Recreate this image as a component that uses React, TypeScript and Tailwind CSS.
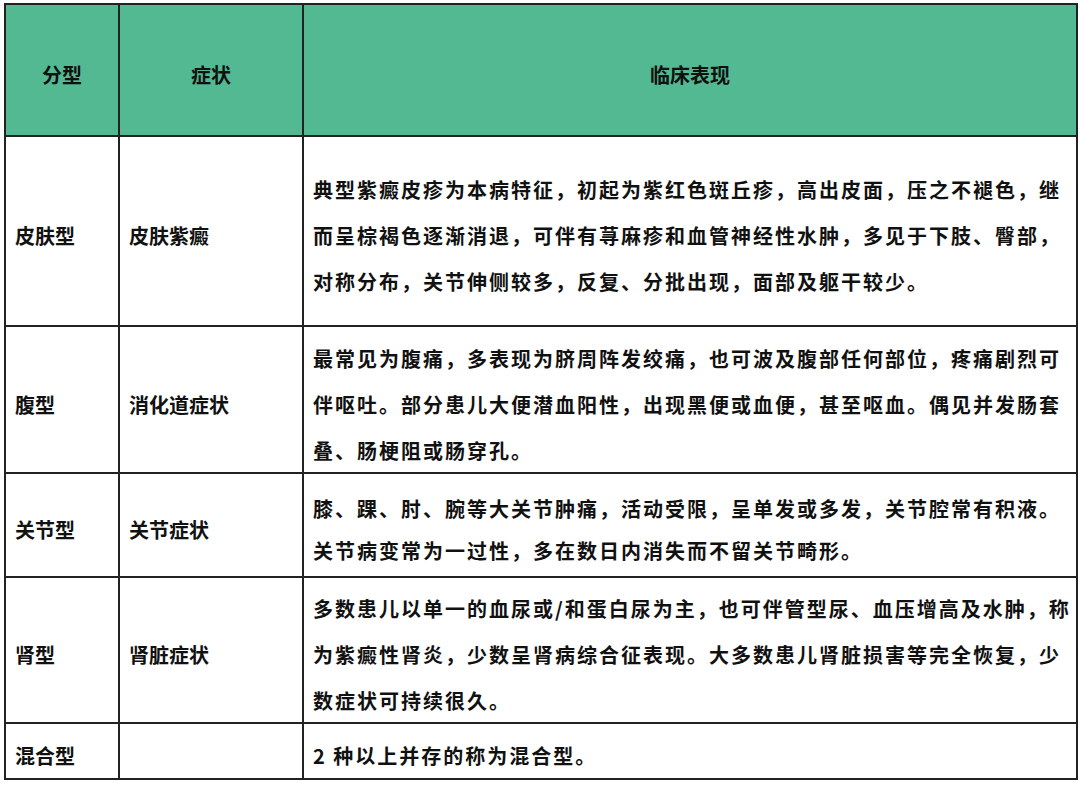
const rows = [
  {
    type: "皮肤型",
    symptom: "皮肤紫癜",
    desc: "典型紫癜皮疹为本病特征，初起为紫红色斑丘疹，高出皮面，压之不褪色，继而呈棕褐色逐渐消退，可伴有荨麻疹和血管神经性水肿，多见于下肢、臀部，对称分布，关节伸侧较多，反复、分批出现，面部及躯干较少。",
    h: "h-[190px]",
    lh: "leading-[46px]",
  },
  {
    type: "腹型",
    symptom: "消化道症状",
    desc: "最常见为腹痛，多表现为脐周阵发绞痛，也可波及腹部任何部位，疼痛剧烈可伴呕吐。部分患儿大便潜血阳性，出现黑便或血便，甚至呕血。偶见并发肠套叠、肠梗阻或肠穿孔。",
    h: "h-[147px]",
    lh: "leading-[46px]",
  },
  {
    type: "关节型",
    symptom: "关节症状",
    desc: "膝、踝、肘、腕等大关节肿痛，活动受限，呈单发或多发，关节腔常有积液。关节病变常为一过性，多在数日内消失而不留关节畸形。",
    h: "h-[104px]",
    lh: "leading-[42px]",
  },
  {
    type: "肾型",
    symptom: "肾脏症状",
    desc: "多数患儿以单一的血尿或/和蛋白尿为主，也可伴管型尿、血压增高及水肿，称为紫癜性肾炎，少数呈肾病综合征表现。大多数患儿肾脏损害等完全恢复，少数症状可持续很久。",
    h: "h-[146px]",
    lh: "leading-[46px]",
  },
  {
    type: "混合型",
    symptom: "",
    desc: "2 种以上并存的称为混合型。",
    h: "h-[56px]",
    lh: "leading-[46px]",
  },
];

// Noto CJK sits high in its line box; nudge glyphs down to match the reference
const nudge = "block translate-y-[5px]";

export default function App() {
  return (
    <div className="w-[1080px] h-[785px] bg-white pt-[3px] pl-[4px] font-['Noto_Sans_CJK_SC','Noto_Sans',sans-serif] font-bold text-[#111]">
      <table className="w-[1074px] table-fixed border-collapse border-2 border-[#222]">
        <colgroup>
          <col className="w-[114px]" />
          <col className="w-[184px]" />
          <col />
        </colgroup>
        <thead>
          <tr className="h-[132px] bg-[#52b993]">
            <th className="border-2 border-[#222] text-[20px] font-bold"><span className={nudge}>分型</span></th>
            <th className="border-2 border-[#222] text-[20px] font-bold"><span className={nudge}>症状</span></th>
            <th className="border-2 border-[#222] text-[20px] font-bold"><span className={nudge}>临床表现</span></th>
          </tr>
        </thead>
        <tbody>
          {rows.map((r) => (
            <tr key={r.type} className={r.h}>
              <td className="border-2 border-[#222] px-[9px] text-[20px] align-middle">
                <span className={nudge}>{r.type}</span>
              </td>
              <td className="border-2 border-[#222] px-[9px] text-[20px] align-middle">
                <span className={nudge}>{r.symptom}</span>
              </td>
              <td className={`border-2 border-[#222] pl-[9px] pr-[4px] text-[20px] tracking-[2px] align-middle ${r.lh}`}>
                <span className={nudge}>{r.desc}</span>
              </td>
            </tr>
          ))}
        </tbody>
      </table>
    </div>
  );
}
